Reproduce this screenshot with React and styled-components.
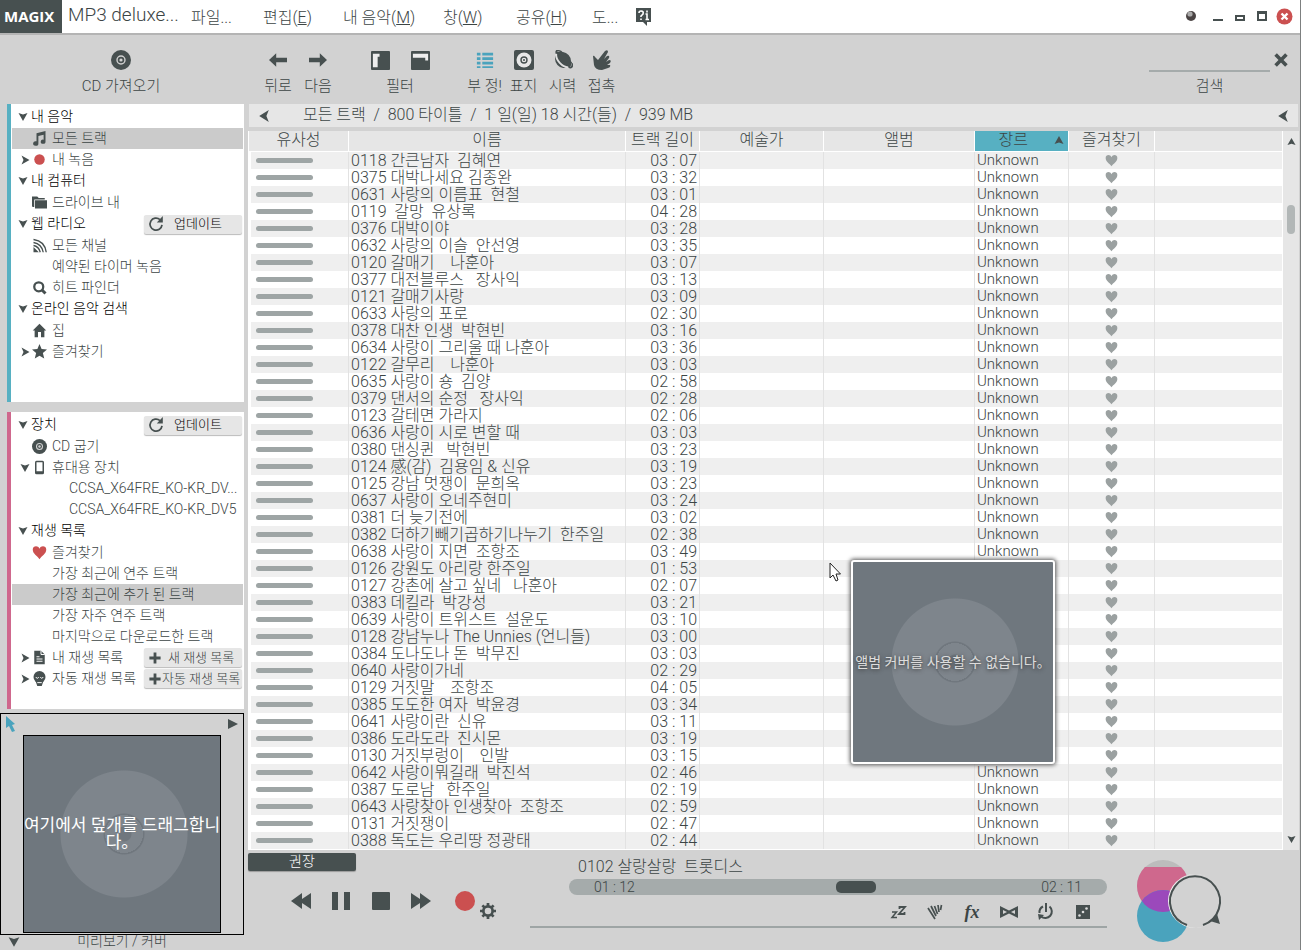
import React from 'react';
import styled, { createGlobalStyle, css } from 'styled-components';

const GlobalStyle = createGlobalStyle`
    :root {
        --ink: #475050;
        --chrome: #d2d2d2;
        --panel: #e6e6e6;
        --muted: #9ea5a5;
        --blue: #57b0c2;
        --pink: #cf688d;
        --red: #cb5050;
    }

    * {
        box-sizing: border-box;
    }

    body {
        margin: 0;
        background: var(--chrome);
        color: #3c4545;
        font-family: Roboto, 'Noto Sans CJK KR', sans-serif;
        font-weight: 300;
        font-size: 16px;
    }

    button,
    input {
        font: inherit;
        color: inherit;
        border: 0;
        padding: 0;
        margin: 0;
        background: none;
    }

    svg {
        display: block;
        flex: none;
    }
`;

const Window = styled.div`
    display: flex;
    flex-direction: column;
    min-height: 100vh;
    border-right: 1px solid #7d8080;
    overflow: hidden;
`;

/* title bar */
const TitleBar = styled.header`
    display: flex;
    align-items: center;
    height: 35px;
    background: #fff;
    border-bottom: 2px solid #b4b4b4;
`;
const Logo = styled.div`
    width: 62px;
    height: 33px;
    margin-right: 6px;
    padding-left: 4px;
    background: var(--ink);
    color: #fff;
    font: 700 15px/32px 'Open Sans', sans-serif;
`;
const AppName = styled.div`
    width: 123px;
    font-size: 19px;
    line-height: 30px;
    height: 33px;
`;
const MenuItem = styled.button`
    width: ${(p) => p.$width}px;
    height: 33px;
    padding-bottom: 2px;
    text-align: left;
    white-space: nowrap;
`;
const WindowButtons = styled.div`
    display: flex;
    align-items: center;
    gap: 6px;
    margin-left: auto;
    padding-right: 7px;
`;
const PlainButton = styled.button`
    display: flex;
    align-items: center;
    justify-content: center;
`;
const FxButton = styled(PlainButton)`
    font: italic 700 18px/20px 'Liberation Serif', serif;
`;

/* toolbar */
const Toolbar = styled.div`
    display: flex;
    height: 69px;
    padding-top: 13px;
`;
const ToolGroup = styled.div`
    display: flex;
    margin-right: ${(p) => p.$after || 0}px;
`;
const ToolButton = styled.button`
    display: flex;
    flex-direction: column;
    align-items: center;
    gap: 5px;
    width: ${(p) => p.$width || 40}px;
    height: 47px;
    font-size: 15px;
    line-height: 18px;
    white-space: nowrap;
`;
const IconRow = styled.span`
    display: flex;
    align-items: center;
    justify-content: center;
    gap: 21px;
    height: 24px;
`;
const Search = styled.div`
    display: grid;
    grid-template-columns: 121px 22px;
    align-content: start;
    margin-left: auto;
    padding-right: 8px;

    input {
        height: 24px;
        border-bottom: 2px solid #a5abab;
        outline: 0;
    }

    label {
        font-size: 15px;
        line-height: 28px;
        text-align: center;
    }
`;

/* body */
const Body = styled.div`
    display: flex;
    flex: 1;
`;
const Sidebar = styled.aside`
    display: flex;
    flex-direction: column;
    flex: none;
    width: 244px;
    margin-right: 4px;
`;
const Panel = styled.nav`
    height: 298px;
    margin: 0 0 10px 7px;
    padding: 2px 1px 0 1px;
    border-left: 4px solid ${(p) => p.$accent};
    background: #fff;
    font-size: 14px;

    & + & {
        height: 297px;
        margin-bottom: 4px;
    }
`;
const TreeRow = styled.div`
    display: flex;
    align-items: center;
    height: ${(p) => (p.$heading ? 22 : 21)}px;
    ${(p) =>
        p.$heading &&
        css`
            color: #000;
        `}
    ${(p) =>
        p.$selected &&
        css`
            background: #cbcbcb;
        `}
`;
const TreeArrow = styled.span`
    display: flex;
    justify-content: flex-end;
    width: ${(p) => (p.$heading ? 16 : 18)}px;
    margin-right: 1px;
`;
const TreeIcon = styled.span`
    display: flex;
    justify-content: center;
    width: 16px;
    margin-right: 5px;
`;
const TreeLink = styled.a`
    flex: 1;
    padding: 0 0 2px ${(p) => p.$indent || 0}px;
    color: inherit;
    line-height: 18px;
    text-decoration: none;
    white-space: nowrap;
`;
const TreeButton = styled.button`
    display: flex;
    align-items: center;
    flex: none;
    gap: ${(p) => p.$gap}px;
    width: 98px;
    height: 19px;
    margin-right: 1px;
    padding-left: 4px;
    border-radius: 2px;
    background: var(--panel);
    box-shadow: 0 1px 1px #bbb;
    font-size: 13px;
    line-height: 18px;
    white-space: nowrap;
`;

const Preview = styled.section`
    display: flex;
    justify-content: space-between;
    height: 222px;
    padding: 2px 4px 0;
    border: 1px solid #000;
`;
const Cover = styled.div`
    display: flex;
    align-items: center;
    justify-content: center;
    width: 198px;
    height: 198px;
    margin-top: 19px;
    border: 1px solid #000;
    background: #6f777e
        radial-gradient(
            circle at calc(50% + 2px) 50%,
            #70777e 7px,
            #7e858c 8px,
            #7e858c 19px,
            #70777e 19px,
            #70777e 20px,
            #7e858c 21px,
            #7e858c 63px,
            #6f777e 64px
        );
    color: #fff;
    font-weight: 400;
    font-size: 17px;
    line-height: 17px;
    text-align: center;
    white-space: nowrap;
`;
const PreviewFooter = styled.div`
    display: flex;
    height: 15px;
    padding: 1px 0 0 8px;
    overflow: hidden;

    span {
        width: 204px;
        font-size: 14px;
        line-height: 10px;
        text-align: center;
    }
`;

/* track list */
const Main = styled.main`
    display: flex;
    flex: 1;
    flex-direction: column;
    min-width: 0;
`;
const Breadcrumb = styled.div`
    display: flex;
    align-items: center;
    height: 23px;
    margin: 0 2px 4px 1px;
    padding: 0 9px;
    background: var(--panel);

    p {
        flex: 1;
        margin: 0 0 0 33px;
        padding-bottom: 2px;
        line-height: 21px;
        white-space: pre;
    }
`;
const ListArea = styled.div`
    position: relative;
    display: flex;
    height: 719px;
    margin-right: 1px;
    background: #fff;
`;
const TrackTable = styled.table`
    flex: 1;
    min-width: 0;
    height: 718px;
    border-spacing: 0;
    table-layout: fixed;
    white-space: pre;

    th {
        height: 21px;
        padding: 0 0 2px;
        border-right: 1px solid #fff;
        border-bottom: 1px solid #fff;
        background: var(--panel);
        font-weight: 300;
        line-height: 18px;
    }

    td {
        height: 17px;
        padding: 0 2px;
        border-right: 1px solid #e2e2e2;
        line-height: 17px;
    }

    th:first-child {
        border-left: 1px solid #fff;
    }

    td:first-child {
        padding-left: 5px;
        border-left: 3px solid #fff;
    }

    th:last-child,
    td:last-child {
        border-right: 0;
    }

    th[aria-sort] {
        background: var(--blue);
    }

    tbody tr:nth-child(odd) {
        background: #efefef;
    }
`;
const SortedHeading = styled.span`
    display: flex;
    align-items: center;
    justify-content: flex-end;
    gap: 26px;
    padding-right: 4px;
`;
const Similarity = styled.div`
    width: 57px;
    height: 5px;
    border-radius: 3px;
    background: var(--muted);
`;
const Length = styled.td`
    text-align: right;
`;
const Genre = styled.td`
    font-size: 15px;
`;
const HeartButton = styled.button`
    display: flex;
    margin: 0 auto;
`;
const ScrollBar = styled.div`
    display: flex;
    flex-direction: column;
    align-items: center;
    justify-content: space-between;
    width: 16px;
    margin-left: 1px;
    padding: 6px 0;
    background: var(--panel);
`;
const ScrollThumb = styled.div`
    width: 8px;
    height: 29px;
    margin: 59px 0 auto;
    border-radius: 4px;
    background: #b2b7b7;
`;
const CoverPopup = styled(Cover)`
    position: absolute;
    left: 603px;
    top: 429px;
    width: 204px;
    height: 204px;
    margin: 0;
    border: 2px solid #fff;
    border-radius: 3px;
    box-shadow: 0 0 4px 1px #555;
    color: #ddd;
    font-size: 14px;
    text-shadow: 0 1px 4px #333;
`;
const Pointer = styled.svg`
    position: absolute;
    left: 581px;
    top: 431px;
`;

/* player */
const Player = styled.footer`
    display: flex;
    height: 100px;
`;
const Controls = styled.div`
    width: 282px;
    padding-top: 3px;
`;
const Recommend = styled.button`
    display: block;
    width: 108px;
    height: 18px;
    padding-bottom: 2px;
    border-radius: 2px;
    background: var(--ink);
    box-shadow: 0 1px 1px #999;
    color: #fff;
    font-size: 14px;
    line-height: 15px;
`;
const Transport = styled.div`
    display: flex;
    align-items: center;
    gap: 20px;
    padding: 12px 0 0 43px;
`;
const RecordGroup = styled.div`
    display: flex;
    align-items: flex-end;
    gap: 5px;
    height: 36px;
    margin-left: 4px;

    button:first-child {
        margin-bottom: 8px;
    }
`;
const NowPlaying = styled.div`
    flex: 1;
    height: 78px;
    padding-left: 39px;
    border-bottom: 2px solid var(--muted);

    h2 {
        margin: 0 0 0 9px;
        padding-top: 6px;
        font-size: 16px;
        font-weight: 300;
        line-height: 22px;
        white-space: pre;
    }
`;
const Seek = styled.label`
    position: relative;
    display: block;
    height: 16px;
    margin-top: 1px;

    input {
        display: block;
        appearance: none;
        width: 100%;
        height: 16px;
        border-radius: 8px;
        background: #a5abab;
    }

    input::-webkit-slider-thumb {
        appearance: none;
        width: 40px;
        height: 12px;
        border-radius: 5px;
        background: var(--ink);
    }
`;
const Time = styled.span`
    position: absolute;
    top: 0;
    ${(p) => p.$side}: 25px;
    font-size: 14px;
    line-height: 16px;
`;
const Effects = styled.div`
    display: flex;
    justify-content: flex-end;
    gap: 17px;
    padding: 7px 14px 0 0;

    button {
        width: 20px;
        height: 20px;
    }
`;
const Mood = styled.button`
    align-self: flex-start;
    width: 193px;
    padding: 9px 0 0 29px;
`;

/* icons */
const CHEVRONS = {
    down: 'M0.500 1L5 2.500L9.500 1L5 9Z',
    right: 'M1.500 0.500L9.500 5L1.500 9.500L3.500 5Z',
    left: 'M9 0L1 5L9 10L7 5Z',
    up: 'M0.500 9L5 7.500L9.500 9L5 1Z',
};

function Chevron({ dir, size = 10 }) {
    return (
        <svg width={size} height={size} viewBox="0 0 10 10" fill="#475050">
            <path d={CHEVRONS[dir]} />
        </svg>
    );
}

function Icon({ size = 18, children }) {
    return (
        <svg width={size} height={size} viewBox="0 0 20 20" fill="#475050">
            {children}
        </svg>
    );
}

const HEART = 'M10 19C7 14 1 12 1 6C1 1 8 0 10 5C12 0 19 1 19 6C19 12 13 14 10 19Z';

const icons = {
    disc: (
        <>
            <circle cx="10" cy="10" r="10" />
            <circle cx="10" cy="10" r="4" fill="none" stroke="#d2d2d2" strokeWidth="1.4" />
            <circle cx="10" cy="10" r="1.6" fill="#d2d2d2" />
        </>
    ),
    note: <path d="M6 3L18 0V14A3.2 2.8 0 1 1 15.500 11.500V5L8.500 6.700V16.500A3.500 3 0 1 1 6 13.800Z" />,
    record: <circle cx="10" cy="10" r="7" fill="#cb5050" />,
    folder: (
        <>
            <path d="M0 2H7L9 4H17V6H3V16H1L0 15Z" />
            <path d="M4 7H20V18H4Z" />
        </>
    ),
    feed: (
        <>
            <path d="M2 12L9 19H2Z" />
            <g fill="none" stroke="#475050" strokeWidth="1.8">
                <path d="M2 10Q9 11 11 19M2 6Q13 8 15 19M2 2Q17 4 19 19" />
            </g>
        </>
    ),
    search: (
        <g fill="none" stroke="#475050">
            <circle cx="9" cy="9" r="6" strokeWidth="3" />
            <path d="M13 13L18 18" strokeWidth="4" />
        </g>
    ),
    home: <path d="M10 1L19 10H16.500V19H12V12H8V19H3.500V10H1Z" />,
    star: <path d="M10 0L12.800 6.500L20 7.300L14.500 12L16.300 19.200L10 15.500L3.700 19.200L5.500 12L0 7.300L7.200 6.500Z" />,
    phone: (
        <>
            <rect x="4" y="1" width="12" height="18" rx="2" />
            <path fill="#fff" d="M6 3H14V15H6Z" />
        </>
    ),
    heart: <path d={HEART} fill="#cb5050" />,
    list: (
        <>
            <path d="M3 1H12L17 6V19H3Z" />
            <path d="M12 1V6H17M6 9H10M6 12H14M6 15H14" stroke="#fff" strokeWidth="1.300" fill="none" />
        </>
    ),
    auto: (
        <>
            <circle cx="10" cy="8" r="8" />
            <path d="M5 14H15L13 20H7Z" />
            <path d="M5 8L7 10L9 8M11 8L13 10L15 8M7 15.500H13" stroke="#fff" strokeWidth="1.300" fill="none" />
        </>
    ),
    refresh: (
        <>
            <path d="M15 4.500A7.500 7.500 0 1 0 17.500 11" fill="none" stroke="#475050" strokeWidth="2.200" />
            <path d="M18.500 0V8H11Z" />
        </>
    ),
    plus: <path d="M8 2H12V8H18V12H12V18H8V12H2V8H8Z" />,
    back: <path d="M0 10L8 2.500V7.500H20V12.500H8V17.500Z" />,
    forward: <path d="M20 10L12 2.500V7.500H0V12.500H12V17.500Z" />,
    filterLeft: (
        <>
            <rect width="20" height="20" rx="1" />
            <path fill="#eee" d="M2 3H9V6H7V17H2Z" />
        </>
    ),
    filterTop: (
        <>
            <rect width="20" height="20" rx="1" />
            <path fill="#eee" d="M2 3H18V10H15V7H2Z" />
        </>
    ),
    details: (
        <path fill="#4aa3bd" d="M1 2H5V5H1ZM7 2H19V5H7ZM1 7H5V10H1ZM7 7H19V10H7ZM1 12H5V15H1ZM7 12H19V15H7ZM1 17H5V19H1ZM7 17H19V19H7Z" />
    ),
    covers: (
        <>
            <rect width="20" height="20" rx="2" />
            <circle cx="10" cy="10" r="7.500" fill="#e8e8e8" />
            <circle cx="10" cy="10" r="3" fill="none" stroke="#475050" strokeWidth="1.400" />
            <circle cx="10" cy="10" r="1" />
        </>
    ),
    planet: (
        <g transform="rotate(48 10 10)">
            <ellipse cx="10" cy="10" rx="8.500" ry="7.500" />
            <path d="M0 9C1 14 19 14 20 9L18 5H2Z" />
            <path d="M1 11C5 15.500 15 15.500 19 11" fill="none" stroke="#e0e0e0" strokeWidth="1.800" />
            <path d="M1 5Q-3 9 1 10.500M19 5Q23 9 19 10.500" fill="none" stroke="#475050" strokeWidth="1.800" />
        </g>
    ),
    touch: (
        <path d="M1 6Q2 5 3 7L6 10L13 1Q16 -1 16 2L12 9L15 6Q18 5 17 8L14 12L17 10Q20 10 18 13L15 15L18 15Q19 17 16 18L10 20Q3 20 2 15Z" />
    ),
    close: <path d="M4 4L16 16M16 4L4 16" stroke="#475050" strokeWidth="4" />,
    rewind: <path d="M0 10L11 2V18ZM8 10L20 2V18Z" />,
    pause: <path d="M1 1H7V19H1ZM13 1H19V19H13Z" />,
    stop: <rect x="1" y="1" width="18" height="18" rx="1" />,
    fast: <path d="M20 10L9 2V18ZM12 10L0 2V18Z" />,
    gear: (
        <>
            <circle cx="10" cy="10" r="5.800" fill="none" stroke="#475050" strokeWidth="3.400" />
            <path
                d="M10 0V4M10 16V20M0 10H4M16 10H20M3 3L6 6M14 14L17 17M3 17L6 14M14 6L17 3"
                stroke="#475050"
                strokeWidth="3.400"
            />
        </>
    ),
    sleep: (
        <>
            <path d="M4 10H8.500L4 15.500H9" fill="none" stroke="#475050" strokeWidth="1.500" />
            <path d="M11.500 7V5H17L11 12H16.500V10" fill="none" stroke="#475050" strokeWidth="1.800" />
        </>
    ),
    fade: (
        <path
            d="M3 6L10 17M6 4L11 14M9.500 4L12.500 12M13 3L14 10M16.500 3L15.500 8"
            fill="none"
            stroke="#475050"
            strokeWidth="1.700"
        />
    ),
    cross: <path d="M1 4L10 8.500L19 4V16L10 11.500L1 16ZM4 8V12L8 10ZM16 8V12L12 10Z" fillRule="evenodd" />,
    timer: (
        <>
            <path d="M13.500 4.500A6.500 6.500 0 1 1 5 14.500M3.500 11A6.500 6.500 0 0 1 7 4.500" fill="none" stroke="#475050" strokeWidth="2" />
            <path d="M9 1H11V10H9ZM2 12L8 13L3 18Z" />
        </>
    ),
    dice: (
        <>
            <rect x="3" y="3" width="14" height="14" />
            <g fill="#ddd">
                <circle cx="6.500" cy="13.500" r="1.300" />
                <circle cx="10" cy="10" r="1.300" />
                <circle cx="13.500" cy="6.500" r="1.300" />
            </g>
        </>
    ),
};

/* data */
const menu = [
    { label: '파일...', width: 72 },
    { label: '편집', hotkey: 'E', width: 80 },
    { label: '내 음악', hotkey: 'M', width: 100 },
    { label: '창', hotkey: 'W', width: 73 },
    { label: '공유', hotkey: 'H', width: 76 },
    { label: '도...', width: 44 },
];

const library = [
    { label: '내 음악', heading: true },
    { label: '모든 트랙', icon: 'note', selected: true },
    { label: '내 녹음', icon: 'record', arrow: 'right' },
    { label: '내 컴퓨터', heading: true },
    { label: '드라이브 내', icon: 'folder' },
    { label: '웹 라디오', heading: true, action: '업데이트', actionIcon: 'refresh', gap: 10 },
    { label: '모든 채널', icon: 'feed' },
    { label: '예약된 타이머 녹음' },
    { label: '히트 파인더', icon: 'search' },
    { label: '온라인 음악 검색', heading: true },
    { label: '집', icon: 'home' },
    { label: '즐겨찾기', icon: 'star', arrow: 'right' },
];

const devices = [
    { label: '장치', heading: true, action: '업데이트', actionIcon: 'refresh', gap: 10 },
    { label: 'CD 굽기', icon: 'disc' },
    { label: '휴대용 장치', icon: 'phone', arrow: 'down' },
    { label: 'CCSA_X64FRE_KO-KR_DV...', indent: 17 },
    { label: 'CCSA_X64FRE_KO-KR_DV5', indent: 17 },
    { label: '재생 목록', heading: true },
    { label: '즐겨찾기', icon: 'heart' },
    { label: '가장 최근에 연주 트랙' },
    { label: '가장 최근에 추가 된 트랙', selected: true },
    { label: '가장 자주 연주 트랙' },
    { label: '마지막으로 다운로드한 트랙' },
    { label: '내 재생 목록', icon: 'list', arrow: 'right', action: '새 재생 목록', actionIcon: 'plus', gap: 6 },
    { label: '자동 재생 목록', icon: 'auto', arrow: 'right', action: '자동 재생 목록', actionIcon: 'plus', gap: 0 },
];

const columns = [
    { label: '유사성', width: 101 },
    { label: '이름', width: 277 },
    { label: '트랙 길이', width: 74 },
    { label: '예술가', width: 124 },
    { label: '앨범', width: 151 },
    { label: '장르', width: 94, sorted: true },
    { label: '즐겨찾기', width: 86 },
    { label: '' },
];

const tracks = [
    ['0118 간큰남자  김혜연', '03 : 07'],
    ['0375 대박나세요 김종완', '03 : 32'],
    ['0631 사랑의 이름표  현철', '03 : 01'],
    ['0119  갈망  유상록', '04 : 28'],
    ['0376 대박이야', '03 : 28'],
    ['0632 사랑의 이슬  안선영', '03 : 35'],
    ['0120 갈매기    나훈아', '03 : 07'],
    ['0377 대전블루스   장사익', '03 : 13'],
    ['0121 갈매기사랑', '03 : 09'],
    ['0633 사랑의 포로', '02 : 30'],
    ['0378 대찬 인생  박현빈', '03 : 16'],
    ['0634 사랑이 그리울 때 나훈아', '03 : 36'],
    ['0122 갈무리    나훈아', '03 : 03'],
    ['0635 사랑이 숑  김양', '02 : 58'],
    ['0379 댄서의 순정   장사익', '02 : 28'],
    ['0123 갈테면 가라지', '02 : 06'],
    ['0636 사랑이 시로 변할 때', '03 : 03'],
    ['0380 댄싱퀸   박현빈', '03 : 23'],
    ['0124 感(감)  김용임 & 신유', '03 : 19'],
    ['0125 강남 멋쟁이  문희옥', '03 : 23'],
    ['0637 사랑이 오네주현미', '03 : 24'],
    ['0381 더 늦기전에', '03 : 02'],
    ['0382 더하기빼기곱하기나누기  한주일', '02 : 38'],
    ['0638 사랑이 지면  조항조', '03 : 49'],
    ['0126 강원도 아리랑 한주일', '01 : 53'],
    ['0127 강촌에 살고 싶네   나훈아', '02 : 07'],
    ['0383 데킬라  박강성', '03 : 21'],
    ['0639 사랑이 트위스트  설운도', '03 : 10'],
    ['0128 강남누나 The Unnies (언니들)', '03 : 00'],
    ['0384 도나도나 돈  박무진', '03 : 03'],
    ['0640 사랑이가네', '02 : 29'],
    ['0129 거짓말    조항조', '04 : 05'],
    ['0385 도도한 여자  박윤경', '03 : 34'],
    ['0641 사랑이란  신유', '03 : 11'],
    ['0386 도라도라  진시몬', '03 : 19'],
    ['0130 거짓부렁이    인발', '03 : 15'],
    ['0642 사랑이뭐길래  박진석', '02 : 46'],
    ['0387 도로남   한주일', '02 : 19'],
    ['0643 사랑찾아 인생찾아  조항조', '02 : 59'],
    ['0131 거짓쟁이', '02 : 47'],
    ['0388 독도는 우리땅 정광태', '02 : 44'],
];

function Tree({ items, accent }) {
    return (
        <Panel $accent={accent}>
            {items.map((item) => (
                <TreeRow key={item.label} $heading={item.heading} $selected={item.selected}>
                    <TreeArrow $heading={item.heading}>
                        {(item.heading || item.arrow) && <Chevron dir={item.arrow || 'down'} />}
                    </TreeArrow>
                    {!item.heading && <TreeIcon>{item.icon && <Icon size={15}>{icons[item.icon]}</Icon>}</TreeIcon>}
                    <TreeLink href="#" $indent={item.heading ? 2 : item.indent}>
                        {item.label}
                    </TreeLink>
                    {item.action && (
                        <TreeButton $gap={item.gap}>
                            <Icon size={item.actionIcon === 'plus' ? 14 : 16}>{icons[item.actionIcon]}</Icon>
                            {item.action}
                        </TreeButton>
                    )}
                </TreeRow>
            ))}
        </Panel>
    );
}

function Tool({ icon, label, width, size = 20 }) {
    return (
        <ToolButton $width={width}>
            <IconRow>
                <Icon size={size}>{icons[icon]}</Icon>
            </IconRow>
            {label}
        </ToolButton>
    );
}

function Tracks() {
    return (
        <TrackTable>
            <colgroup>
                {columns.map((c) => (
                    <col key={c.label} width={c.width} />
                ))}
            </colgroup>
            <thead>
                <tr>
                    {columns.map((c) => (
                        <th key={c.label} aria-sort={c.sorted ? 'ascending' : undefined}>
                            {c.sorted ? (
                                <SortedHeading>
                                    {c.label}
                                    <Chevron dir="up" />
                                </SortedHeading>
                            ) : (
                                c.label
                            )}
                        </th>
                    ))}
                </tr>
            </thead>
            <tbody>
                {tracks.map(([name, length]) => (
                    <tr key={name}>
                        <td>
                            <Similarity />
                        </td>
                        <td>{name}</td>
                        <Length>{length}</Length>
                        <td />
                        <td />
                        <Genre>Unknown</Genre>
                        <td>
                            <HeartButton aria-label="즐겨찾기">
                                <svg width="13" height="13" viewBox="0 0 20 20">
                                    <path d={HEART} fill="#9ba1a1" />
                                </svg>
                            </HeartButton>
                        </td>
                        <td />
                    </tr>
                ))}
            </tbody>
        </TrackTable>
    );
}

function App() {
    return (
        <Window>
            <GlobalStyle />
            <TitleBar>
                <Logo>MAGIX</Logo>
                <AppName>MP3 deluxe...</AppName>
                {menu.map((m) => (
                    <MenuItem key={m.label} $width={m.width}>
                        {m.label}
                        {m.hotkey && (
                            <>
                                (<u>{m.hotkey}</u>)
                            </>
                        )}
                    </MenuItem>
                ))}
                <PlainButton aria-label="도움말">
                    <svg width="15" height="18" viewBox="0 0 15 18">
                        <path d="M0 0H15V14H11V18L7 14H0Z" fill="#475050" />
                        <path d="M3 5Q3 3 5 3Q8 3 7 6L5 8V9M5 10.500V12M11 2.500V4.500M9.500 6H11V11M9.500 11.500H13" stroke="#fff" strokeWidth="1.600" fill="none" />
                    </svg>
                </PlainButton>
                <WindowButtons>
                    <PlainButton aria-label="상태">
                        <svg width="20" height="18" viewBox="0 0 20 18">
                            <circle cx="7" cy="8" r="5" fill="#4a4444" />
                            <circle cx="6" cy="6" r="2.600" fill="#aaa" />
                        </svg>
                    </PlainButton>
                    <PlainButton aria-label="최소화">
                        <svg width="16" height="18" viewBox="0 0 16 18">
                            <path d="M3 11H13V13H3Z" fill="#475050" />
                        </svg>
                    </PlainButton>
                    <PlainButton aria-label="작게">
                        <svg width="16" height="18" viewBox="0 0 16 18">
                            <path d="M4 8H12V12H4Z" fill="none" stroke="#475050" strokeWidth="2" />
                        </svg>
                    </PlainButton>
                    <PlainButton aria-label="최대화">
                        <svg width="16" height="18" viewBox="0 0 16 18">
                            <path d="M4 5H12V12H4Z" fill="none" stroke="#475050" strokeWidth="2" />
                            <path d="M3 3H13V6H3Z" fill="#475050" />
                        </svg>
                    </PlainButton>
                    <PlainButton aria-label="닫기">
                        <svg width="17" height="18" viewBox="0 0 17 18">
                            <circle cx="8.500" cy="8.500" r="8" fill="#cb5050" />
                            <path d="M5.500 5.500L11.500 11.500M11.500 5.500L5.500 11.500" stroke="#fff" strokeWidth="2.400" />
                        </svg>
                    </PlainButton>
                </WindowButtons>
            </TitleBar>

            <Toolbar>
                <ToolGroup $after={16}>
                    <Tool icon="disc" label="CD 가져오기" width={242} />
                </ToolGroup>
                <ToolGroup $after={22}>
                    <Tool icon="back" label="뒤로" size={18} />
                    <Tool icon="forward" label="다음" size={18} />
                </ToolGroup>
                <ToolGroup $after={25}>
                    <ToolButton $width={80}>
                        <IconRow>
                            <Icon size={19}>{icons.filterLeft}</Icon>
                            <Icon size={19}>{icons.filterTop}</Icon>
                        </IconRow>
                        필터
                    </ToolButton>
                </ToolGroup>
                <ToolGroup>
                    <Tool icon="details" label="부 정!" width={39} size={18} />
                    <Tool icon="covers" label="표지" width={39} />
                    <Tool icon="planet" label="시력" width={39} />
                    <Tool icon="touch" label="접촉" width={39} />
                </ToolGroup>
                <Search>
                    <input id="search" type="text" />
                    <PlainButton aria-label="지우기">
                        <Icon size={18}>{icons.close}</Icon>
                    </PlainButton>
                    <label htmlFor="search">검색</label>
                </Search>
            </Toolbar>

            <Body>
                <Sidebar>
                    <Tree items={library} accent="var(--blue)" />
                    <Tree items={devices} accent="var(--pink)" />
                    <Preview>
                        <svg width="12" height="16" viewBox="0 0 12 16">
                            <path d="M1 0L10 8L7 9L10 15L7 16L4 10L1 12Z" fill="#4aa3bd" />
                        </svg>
                        <Cover>
                            여기에서 덮개를 드래그합니
                            <br />
                            다。
                        </Cover>
                        <svg width="12" height="16" viewBox="0 0 12 16">
                            <path d="M1 3L11 8L1 13Z" fill="#475050" />
                        </svg>
                    </Preview>
                    <PreviewFooter>
                        <Chevron dir="down" size={12} />
                        <span>미리보기 / 커버</span>
                    </PreviewFooter>
                </Sidebar>

                <Main>
                    <Breadcrumb>
                        <Chevron dir="left" size={12} />
                        <p>모든 트랙  /  800 타이틀  /  1 일(일) 18 시간(들)  /  939 MB</p>
                        <Chevron dir="left" size={12} />
                    </Breadcrumb>
                    <ListArea>
                        <Tracks />
                        <ScrollBar>
                            <Chevron dir="up" size={9} />
                            <ScrollThumb />
                            <Chevron dir="down" size={9} />
                        </ScrollBar>
                        <Pointer width="13" height="20" viewBox="0 0 13 20">
                            <path d="M1 1V16L4 13L7 19L9 18L7 12H11.500Z" fill="#fff" stroke="#222" />
                        </Pointer>
                        <CoverPopup>앨범 커버를 사용할 수 없습니다。</CoverPopup>
                    </ListArea>

                    <Player>
                        <Controls>
                            <Recommend>권장</Recommend>
                            <Transport>
                                {['rewind', 'pause', 'stop', 'fast'].map((name) => (
                                    <PlainButton key={name} aria-label={name}>
                                        <Icon size={20}>{icons[name]}</Icon>
                                    </PlainButton>
                                ))}
                                <RecordGroup>
                                    <PlainButton aria-label="record">
                                        <svg width="20" height="20" viewBox="0 0 20 20">
                                            <circle cx="10" cy="10" r="10" fill="#cb5050" />
                                        </svg>
                                    </PlainButton>
                                    <PlainButton aria-label="settings">
                                        <Icon size={16}>{icons.gear}</Icon>
                                    </PlainButton>
                                </RecordGroup>
                            </Transport>
                        </Controls>
                        <NowPlaying>
                            <h2>0102 살랑살랑  트롯디스</h2>
                            <Seek>
                                <input type="range" min="0" max="1000" defaultValue="536" aria-label="재생 위치" />
                                <Time $side="left">01 : 12</Time>
                                <Time $side="right">02 : 11</Time>
                            </Seek>
                            <Effects>
                                <PlainButton aria-label="sleep">
                                    <Icon size={20}>{icons.sleep}</Icon>
                                </PlainButton>
                                <PlainButton aria-label="fade">
                                    <Icon size={20}>{icons.fade}</Icon>
                                </PlainButton>
                                <FxButton>fx</FxButton>
                                <PlainButton aria-label="crossfade">
                                    <Icon size={20}>{icons.cross}</Icon>
                                </PlainButton>
                                <PlainButton aria-label="timer">
                                    <Icon size={20}>{icons.timer}</Icon>
                                </PlainButton>
                                <PlainButton aria-label="shuffle">
                                    <Icon size={20}>{icons.dice}</Icon>
                                </PlainButton>
                            </Effects>
                        </NowPlaying>
                        <Mood aria-label="mood">
                            <svg width="90" height="86" viewBox="0 0 90 86">
                                <clipPath id="upper">
                                    <circle cx="27" cy="27" r="26" />
                                </clipPath>
                                <circle cx="27" cy="27" r="26" fill="#bcbcbc" />
                                <g clipPath="url(#upper)">
                                    <rect y="8" width="60" height="60" fill="#cf688d" />
                                </g>
                                <circle cx="27" cy="57" r="26" fill="#4aa3bd" />
                                <g clipPath="url(#upper)">
                                    <circle cx="27" cy="57" r="26" fill="#9b49bb" />
                                </g>
                                <circle cx="59" cy="42" r="27" fill="#f2f2f2" />
                                <circle cx="60" cy="42" r="27" fill="#d2d2d2" />
                                <path d="M51 66A25 25 0 1 1 67 66" fill="none" stroke="#475050" strokeWidth="2" />
                                <path d="M74 62L81 55L84 65Z" fill="#475050" />
                            </svg>
                        </Mood>
                    </Player>
                </Main>
            </Body>
        </Window>
    );
}

export default App;
